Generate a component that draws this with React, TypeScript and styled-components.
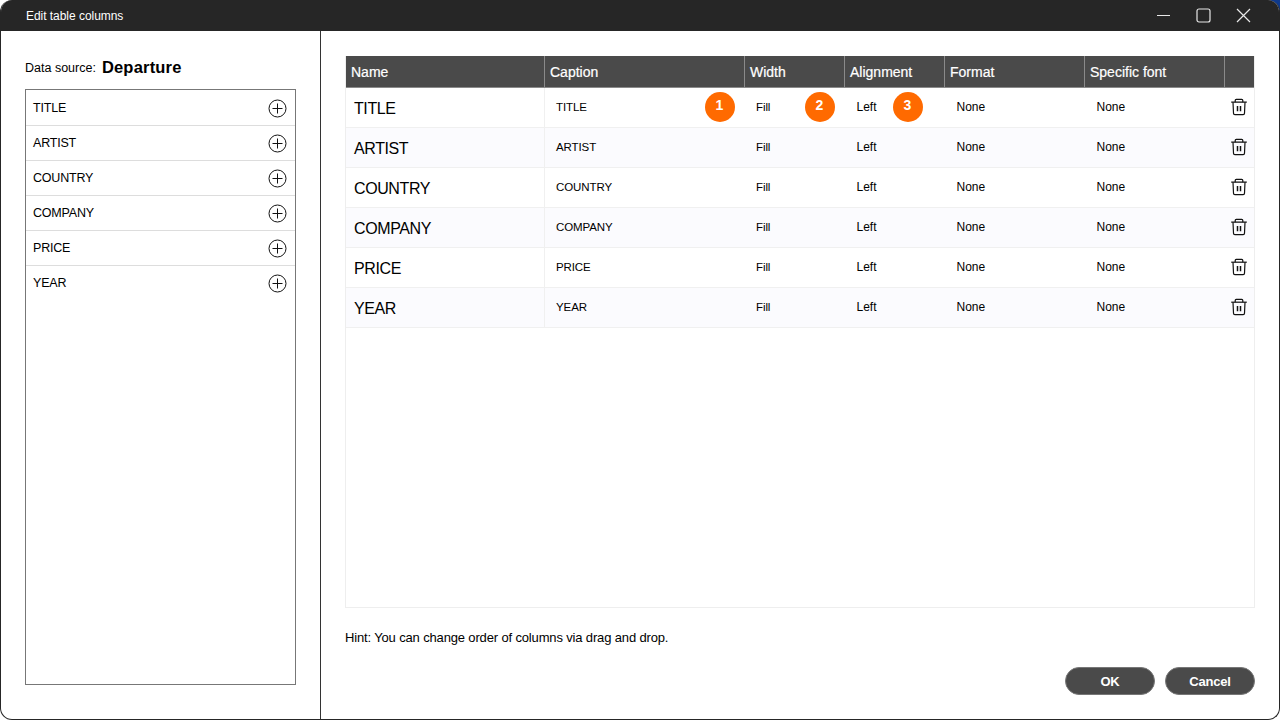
import React from "react"
import styled, { createGlobalStyle } from "styled-components"

const fields = ["TITLE", "ARTIST", "COUNTRY", "COMPANY", "PRICE", "YEAR"]
const headers = ["Name", "Caption", "Width", "Alignment", "Format", "Specific font", ""]
const gridColumns = "199px 200px 100px 100px 140px 140px 29px"

const GlobalStyle = createGlobalStyle`
  html, body {
    margin: 0;
    padding: 0;
    background: #ffffff;
    font-family: "Liberation Sans", Arial, sans-serif;
    color: #000000;
  }
  * {
    box-sizing: border-box;
  }
`

const Page = styled.div`
  width: 1280px;
  height: 720px;
  background: linear-gradient(#0f3a8c, #0f3a8c) top right / 20px 20px no-repeat, #ffffff;
`

const Window = styled.div`
  width: 1280px;
  height: 720px;
  display: flex;
  flex-direction: column;
  background: #ffffff;
  border: 1px solid #262626;
  border-top: 0;
  border-radius: 12px;
  overflow: hidden;
`

const TitleBar = styled.header`
  height: 31px;
  flex: none;
  margin: 0 -1px;
  padding: 0 29px 0 26px;
  display: flex;
  align-items: center;
  justify-content: space-between;
  background: #262626;
  color: #ffffff;
  font-size: 12px;
  letter-spacing: -0.04px;
`

const WindowButtons = styled.div`
  display: flex;
  align-items: center;
  gap: 25px;
`

const WindowButton = styled.svg`
  width: 15px;
  height: 15px;
  display: block;
  fill: none;
  stroke: #e8e8e8;
  stroke-width: 1.2;
`

const Body = styled.div`
  flex: 1;
  display: flex;
  min-height: 0;
`

const Sidebar = styled.aside`
  width: 320px;
  flex: none;
  padding: 27px 24px 34px 24px;
  display: flex;
  flex-direction: column;
  border-right: 1px solid #333333;
`

const SourceRow = styled.div`
  height: 19px;
  margin-bottom: 12px;
  display: flex;
  align-items: center;
  gap: 6px;
  font-size: 12.5px;
`

const SourceName = styled.strong`
  font-size: 16.5px;
  letter-spacing: 0.2px;
`

const FieldList = styled.div`
  width: 271px;
  flex: 1;
  padding-top: 1px;
  border: 1px solid #777777;
`

const FieldRow = styled.div`
  height: 35px;
  padding: 0 8px 0 7px;
  display: flex;
  align-items: center;
  justify-content: space-between;
  border-bottom: 1px solid #dddddd;
  font-size: 12.5px;
  letter-spacing: -0.2px;

  &:last-child {
    border-bottom-color: transparent;
  }
`

const RoundIcon = styled.svg`
  width: 19px;
  height: 19px;
  display: block;
  fill: none;
  stroke: #111111;
  stroke-width: 1;
`

const Main = styled.main`
  flex: 1;
  min-width: 0;
  padding: 25px 24px 0 24px;
  display: flex;
  flex-direction: column;
`

const TableBox = styled.div`
  width: 910px;
  height: 552px;
  border: 1px solid #eeeeee;
  border-top: 0;
`

const HeadRow = styled.div`
  height: 32px;
  display: grid;
  grid-template-columns: ${gridColumns};
  background: #4a4a4a;
  border-bottom: 1px solid #8a8a8a;
  color: #ffffff;
  font-size: 14px;
  -webkit-text-stroke: 0.2px #ffffff;
`

const HeadCell = styled.div`
  padding: 8px 0 0 5px;
  border-right: 1px solid #8a8a8a;

  &:last-child {
    border-right: 0;
  }
`

const Row = styled.div<{ $striped: boolean }>`
  height: 40px;
  position: relative;
  display: grid;
  grid-template-columns: ${gridColumns};
  align-items: center;
  background: ${({ $striped }) => ($striped ? "#fbfbfe" : "#ffffff")};
  border-bottom: 1px solid #f0f0f0;
`

const NameCell = styled.div`
  height: 100%;
  display: flex;
  align-items: center;
  padding: 2px 0 0 8px;
  border-right: 1px solid #f0f0f0;
  font-size: 16px;
  letter-spacing: -0.4px;
`

const Cell = styled.div<{ $compact?: boolean }>`
  padding: 0 0 2px ${({ $compact }) => ($compact ? "11px" : "11.5px")};
  font-size: ${({ $compact }) => ($compact ? "11.5px" : "12px")};
  letter-spacing: ${({ $compact }) => ($compact ? "-0.1px" : "0")};
`

const TrashCell = styled.div`
  display: flex;
  justify-content: center;
  padding: 0 2px 1px 0;
`

const TrashIcon = styled.svg`
  width: 18px;
  height: 18px;
  display: block;
  fill: none;
  stroke: #111111;
  stroke-width: 1.2;
  stroke-linejoin: round;
`

const Badge = styled.span<{ $left: number }>`
  position: absolute;
  top: 4px;
  left: ${({ $left }) => $left}px;
  width: 30px;
  height: 30px;
  padding: 0 1px 4px 0;
  display: flex;
  align-items: center;
  justify-content: center;
  border-radius: 50%;
  background: #ff6a00;
  color: #ffffff;
  font-size: 14px;
  font-weight: 700;
`

const Hint = styled.p`
  margin: 22px 0 0 0;
  font-size: 13px;
  letter-spacing: -0.15px;
`

const Footer = styled.div`
  margin-top: 22px;
  width: 910px;
  display: flex;
  justify-content: flex-end;
  gap: 10px;
`

const DialogButton = styled.button`
  width: 90px;
  height: 28px;
  padding: 0;
  border: 1px solid #777777;
  border-radius: 14px;
  background: #4a4a4a;
  color: #ffffff;
  font-family: inherit;
  font-size: 13px;
  font-weight: 700;
  letter-spacing: -0.2px;
`

const badges = [359, 459, 547]

const App: React.FC = () => (
  <Page>
    <GlobalStyle />
    <Window>
      <TitleBar>
        <span>Edit table columns</span>
        <WindowButtons>
          <WindowButton viewBox="0 0 15 15">
            <path d="M1 7.5h13" />
          </WindowButton>
          <WindowButton viewBox="0 0 15 15">
            <rect x="1" y="1" width="13" height="13" rx="2" />
          </WindowButton>
          <WindowButton viewBox="0 0 15 15">
            <path d="M1 1l13 13M14 1L1 14" />
          </WindowButton>
        </WindowButtons>
      </TitleBar>
      <Body>
        <Sidebar>
          <SourceRow>
            <span>Data source:</span>
            <SourceName>Departure</SourceName>
          </SourceRow>
          <FieldList>
            {fields.map((field) => (
              <FieldRow key={field}>
                <span>{field}</span>
                <RoundIcon viewBox="0 0 19 19">
                  <circle cx="9.5" cy="9.5" r="8.5" />
                  <path d="M9.5 4.5v10M4.5 9.5h10" />
                </RoundIcon>
              </FieldRow>
            ))}
          </FieldList>
        </Sidebar>
        <Main>
          <TableBox>
            <HeadRow>
              {headers.map((header) => (
                <HeadCell key={header}>{header}</HeadCell>
              ))}
            </HeadRow>
            {fields.map((field, index) => (
              <Row key={field} $striped={index % 2 === 1}>
                <NameCell>{field}</NameCell>
                <Cell $compact>{field}</Cell>
                <Cell $compact>Fill</Cell>
                <Cell>Left</Cell>
                <Cell>None</Cell>
                <Cell>None</Cell>
                <TrashCell>
                  <TrashIcon viewBox="0 0 18 18">
                    <path d="M1.2 4.2h15.6" />
                    <path d="M5.2 4.2V2.4c0-.6.4-1 1-1h5.6c.6 0 1 .4 1 1v1.8" />
                    <path d="M3 4.2l.5 11c0 .9.6 1.4 1.4 1.4h8.2c.8 0 1.4-.5 1.4-1.4l.5-11" />
                    <path d="M7.5 8v5.2M10.5 8v5.2" strokeWidth="1.5" />
                  </TrashIcon>
                </TrashCell>
                {index === 0 &&
                  badges.map((left, badge) => (
                    <Badge key={left} $left={left}>
                      {badge + 1}
                    </Badge>
                  ))}
              </Row>
            ))}
          </TableBox>
          <Hint>Hint: You can change order of columns via drag and drop.</Hint>
          <Footer>
            <DialogButton>OK</DialogButton>
            <DialogButton>Cancel</DialogButton>
          </Footer>
        </Main>
      </Body>
    </Window>
  </Page>
)

export default App
